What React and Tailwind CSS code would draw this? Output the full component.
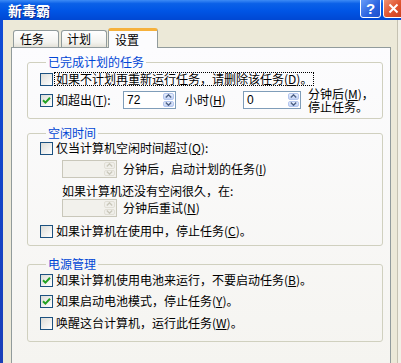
import React from "react";

const Box = ({ checked }) => (
  <span className="w-[13px] h-[13px] shrink-0 border border-[#1C5180] bg-[linear-gradient(135deg,#DCDCD7,#FFFFFF)] flex items-center justify-center">
    {checked && (
      <svg width="9" height="9" viewBox="0 0 9 9">
        <path d="M1 4.2 L3.4 6.6 L8 1.8" stroke="#21A121" strokeWidth="2" fill="none" />
      </svg>
    )}
  </span>
);

const Chev = ({ up, color }) => (
  <svg width="7" height="4" viewBox="0 0 7 4">
    <path
      d={up ? "M0.8 3.4 L3.5 0.8 L6.2 3.4" : "M0.8 0.6 L3.5 3.2 L6.2 0.6"}
      stroke={color}
      strokeWidth="1.4"
      fill="none"
    />
  </svg>
);

const SpinBox = ({ value, disabled, className }) => (
  <div
    className={
      "h-[18px] shrink-0 flex items-stretch border " +
      (disabled ? "border-[#C9C7BA] bg-[#F2F1EC] " : "border-[#7F9DB9] bg-white ") +
      className
    }
  >
    <div className="flex-1 flex items-center pl-[3px] text-[12px] leading-[14px] font-['Liberation_Sans',sans-serif]">
      {value}
    </div>
    <div className="w-[12px] flex flex-col gap-[1px] py-[1px] pr-[1px]">
      <div
        className={
          "flex-1 rounded-[2px] border flex items-center justify-center " +
          (disabled
            ? "border-[#E1DFD6] bg-[#F0EFEA]"
            : "border-[#B4C6EE] bg-[linear-gradient(to_bottom,#E8EFFD,#C2D3F6)]")
        }
      >
        <Chev up color={disabled ? "#C9C7BA" : "#4D6185"} />
      </div>
      <div
        className={
          "flex-1 rounded-[2px] border flex items-center justify-center " +
          (disabled
            ? "border-[#E1DFD6] bg-[#F0EFEA]"
            : "border-[#B4C6EE] bg-[linear-gradient(to_bottom,#E8EFFD,#C2D3F6)]")
        }
      >
        <Chev color={disabled ? "#C9C7BA" : "#4D6185"} />
      </div>
    </div>
  </div>
);

const Legend = ({ children }) => (
  <legend className="ml-[6px] px-[2px] leading-[14px] text-[#0046D5]">{children}</legend>
);

const CheckRow = ({ checked, children, className }) => (
  <div className={"h-[14px] flex items-center " + className}>
    <Box checked={checked} />
    <span className="ml-[3px] leading-[14px] whitespace-nowrap">{children}</span>
  </div>
);

export default function App() {
  return (
    <div className="w-[401px] h-[363px] overflow-hidden flex flex-col bg-[#ECE9D8] font-['Noto_Sans_CJK_SC',sans-serif] text-[12px] text-black">
      {/* title bar */}
      <div className="h-[20px] shrink-0 flex items-start overflow-hidden bg-[linear-gradient(to_bottom,#3D8BF5_0%,#0B61E8_18%,#0055E5_55%,#0047D3_100%)]">
        <div className="pl-[8px] h-[20px] flex items-center text-white font-bold text-[14px] leading-[16px] [text-shadow:1px_1px_0_#0A2A8E]">
          新毒霸
        </div>
        <div className="ml-auto flex gap-[2px] -mt-[3px] -mr-[3px]">
          <div className="w-[21px] h-[21px] rounded-[3px] border border-white bg-[linear-gradient(135deg,#6FA4FB,#2A63E0_60%,#1F4FCB)] flex items-center justify-center text-white font-bold text-[15px] leading-[15px] font-['Liberation_Sans',sans-serif] pt-[2px]">
            ?
          </div>
          <div className="w-[21px] h-[21px] rounded-[3px] border border-white bg-[linear-gradient(135deg,#F0997A,#E0532E_55%,#C8401E)] flex items-center justify-center pt-[2px]">
            <svg width="11" height="11" viewBox="0 0 11 11">
              <path d="M1.5 1.5 L9.5 9.5 M9.5 1.5 L1.5 9.5" stroke="white" strokeWidth="2" />
            </svg>
          </div>
        </div>
      </div>

      <div className="flex-1 flex min-h-0">
        <div className="w-[3px] bg-[linear-gradient(to_bottom,#0F4BD6,#1A3FB8)]" />
        <div className="flex-1 flex flex-col pl-[8px] pr-[6px] pt-[8px] min-w-0">
          {/* tabs */}
          <div className="h-[20px] flex items-end pl-[2px] -mb-[1px] relative z-10">
            <div className="w-[46px] h-[17px] mb-[1px] rounded-t-[3px] border border-b-0 border-[#919B9C] bg-[linear-gradient(to_bottom,#FFFFFF,#F3F3EF_70%,#E4E2D8)] flex items-center pl-[6px] leading-[14px]">
              任务
            </div>
            <div className="ml-[2px] w-[46px] h-[17px] mb-[1px] rounded-t-[3px] border border-b-0 border-[#919B9C] bg-[linear-gradient(to_bottom,#FFFFFF,#F3F3EF_70%,#E4E2D8)] flex items-center pl-[5px] leading-[14px]">
              计划
            </div>
            <div className="ml-[1px] w-[50px] h-[20px] rounded-t-[3px] border border-b-0 border-[#919B9C] border-t-[3px] border-t-[#F6B13C] bg-[#FCFCFE] flex items-center pl-[6px] leading-[14px]">
              设置
            </div>
          </div>

          {/* panel */}
          <div className="flex-1 border border-b-0 border-[#919B9C] bg-[linear-gradient(to_bottom,#FCFCFE,#F5F4F0)] pl-[15px] pr-[7px] pt-[7px] flex flex-col">
            {/* group 1 */}
            <fieldset className="border border-[#D0D0BF] rounded-[3px] pl-[12px] pb-[6px] flex flex-col">
              <Legend>已完成计划的任务</Legend>
              <div className="mt-[3px] h-[14px] flex items-center">
                <Box />
                <span className="ml-[1px] px-[1px] border border-dotted border-black leading-[12px] whitespace-nowrap">
                  如果不计划再重新运行任务，请删除该任务(<u>D</u>)。
                </span>
              </div>
              <div className="mt-[2px] h-[24px] flex items-center">
                <Box checked />
                <span className="ml-[3px] w-[67px] leading-[14px] whitespace-nowrap">
                  如超出(<u>T</u>):
                </span>
                <SpinBox value="72" className="w-[53px]" />
                <span className="ml-[9px] w-[58px] leading-[14px] whitespace-nowrap">
                  小时(<u>H</u>)
                </span>
                <SpinBox value="0" className="w-[58px]" />
                <div className="ml-[7px] flex flex-col leading-[13px] whitespace-nowrap">
                  <span>
                    分钟后(<u>M</u>)，
                  </span>
                  <span>停止任务。</span>
                </div>
              </div>
            </fieldset>

            {/* group 2 */}
            <fieldset className="mt-[7px] border border-[#D0D0BF] rounded-[3px] pl-[12px] pb-[7px] flex flex-col">
              <Legend>空闲时间</Legend>
              <CheckRow className="mt-[1px]">
                仅当计算机空闲时间超过(<u>Q</u>):
              </CheckRow>
              <div className="mt-[5px] h-[18px] flex items-center pl-[22px]">
                <SpinBox disabled value="" className="w-[55px]" />
                <span className="ml-[6px] leading-[14px] whitespace-nowrap">
                  分钟后，启动计划的任务(<u>I</u>)
                </span>
              </div>
              <div className="mt-[6px] h-[14px] flex items-center pl-[22px] leading-[14px] whitespace-nowrap">
                如果计算机还没有空闲很久，在:
              </div>
              <div className="mt-[1px] h-[18px] flex items-center pl-[22px]">
                <SpinBox disabled value="" className="w-[55px]" />
                <span className="ml-[6px] leading-[14px] whitespace-nowrap">
                  分钟后重试(<u>N</u>)
                </span>
              </div>
              <CheckRow className="mt-[7px]">
                如果计算机在使用中，停止任务(<u>C</u>)。
              </CheckRow>
            </fieldset>

            {/* group 3 */}
            <fieldset className="mt-[11px] border border-[#D0D0BF] rounded-[3px] pl-[12px] pb-[11px] flex flex-col">
              <Legend>电源管理</Legend>
              <CheckRow checked className="mt-[2px]">
                如果计算机使用电池来运行，不要启动任务(<u>B</u>)。
              </CheckRow>
              <CheckRow checked className="mt-[7px]">
                如果启动电池模式，停止任务(<u>Y</u>)。
              </CheckRow>
              <CheckRow className="mt-[8px]">
                唤醒这台计算机，运行此任务(<u>W</u>)。
              </CheckRow>
            </fieldset>
          </div>
        </div>
        <div className="w-[4px] border-l border-[#C5C2B2] bg-[#F2F0E6]" />
      </div>
    </div>
  );
}
